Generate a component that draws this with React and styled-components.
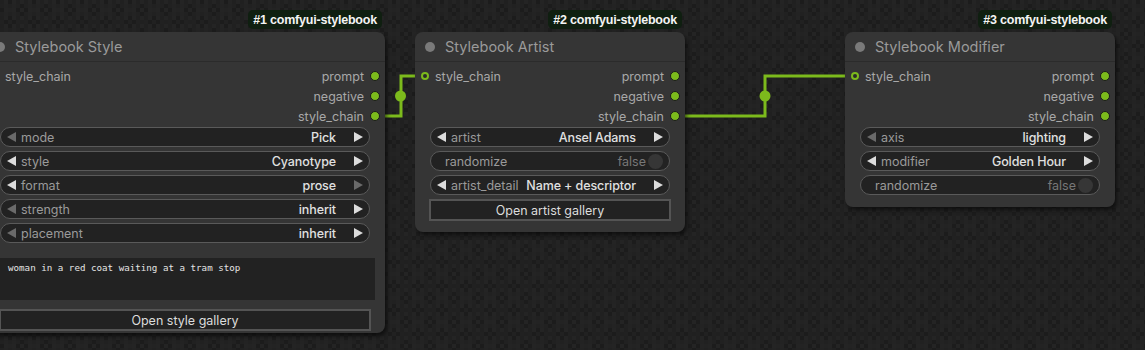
import React from "react";
import styled, { createGlobalStyle } from "styled-components";

const GREEN = "#7cba1c";

const Global = createGlobalStyle`
  html, body { margin: 0; padding: 0; background: #1e1e1e; }
  body { font-family: Inter, "Noto Sans", sans-serif; }
  * { box-sizing: border-box; }
`;

const Canvas = styled.div`
  position: relative;
  width: 1145px;
  height: 350px;
  overflow: hidden;
  background-color: #1c1c1c;
  background-image:
    conic-gradient(#242424 25%, transparent 0 50%, #212121 0 75%, transparent 0),
    conic-gradient(transparent 25%, #202020 0 50%, transparent 0 75%, #232323 0);
  background-size: 8px 8px, 24px 24px;
  background-position: 0 0, 4px 4px;
`;

const Wires = styled.svg`
  position: absolute;
  left: 0;
  top: 0;
  pointer-events: none;
`;

const NodeBox = styled.div`
  position: absolute;
  left: ${(p) => p.$x}px;
  top: ${(p) => p.$y}px;
  width: ${(p) => p.$w}px;
  background: #353535;
  border-radius: 8px;
  box-shadow: 2px 3px 4px rgba(0, 0, 0, 0.55);
  padding-bottom: ${(p) => p.$pb}px;
  display: flex;
  flex-direction: column;
`;

const Badge = styled.div`
  position: absolute;
  right: 3px;
  top: -22px;
  height: 19px;
  padding: 0 5px;
  border-radius: 5px;
  background: #0f1f10;
  color: #f4f4f4;
  font-family: "Liberation Sans", Arial, sans-serif;
  font-size: 12.5px;
  font-weight: 700;
  letter-spacing: -0.2px;
  display: flex;
  align-items: center;
  white-space: nowrap;
`;

const Title = styled.div`
  height: 30px;
  display: flex;
  align-items: center;
  padding-left: 10px;
  gap: 10px;
  border-bottom: 1px solid #2b2b2b;
  color: #9a9a9a;
  font-size: 14.5px;
`;

const TitleDot = styled.span`
  width: 10px;
  height: 10px;
  border-radius: 50%;
  background: #7a7a7a;
  flex: none;
`;

const Slots = styled.div`
  padding-top: 4px;
  display: grid;
  grid-template-columns: 1fr 1fr;
  grid-auto-rows: 20px;
  margin-bottom: 1px;
`;

const SlotIn = styled.div`
  display: flex;
  align-items: center;
  gap: 6px;
  padding-left: 6px;
  color: #a8a8a8;
  font-size: 12.5px;
  grid-column: 1;
`;

const SlotOut = styled.div`
  display: flex;
  align-items: center;
  justify-content: flex-end;
  gap: 6px;
  padding-right: 5px;
  color: #a8a8a8;
  font-size: 12.5px;
  grid-column: 2;
`;

const RingDot = styled.span`
  width: 8px;
  height: 8px;
  border-radius: 50%;
  border: 2px solid ${GREEN};
  background: #2a2a2a;
  flex: none;
`;

const FullDot = styled.span`
  width: 10px;
  height: 10px;
  border-radius: 50%;
  border: 1px solid #1a1a1a;
  background: ${GREEN};
  flex: none;
`;

const Widgets = styled.div`
  display: flex;
  flex-direction: column;
  gap: 4px;
  padding: 0 15px;
`;

const Pill = styled.div`
  height: 20px;
  border-radius: 10px;
  background: #222;
  border: 1px solid #5a5a5a;
  display: flex;
  align-items: center;
  padding: 0 6px 0 6px;
  font-size: 12.5px;
  white-space: nowrap;
`;

const Arrow = styled.span`
  width: 0;
  height: 0;
  border-top: 5px solid transparent;
  border-bottom: 5px solid transparent;
  ${(p) =>
    p.$dir === "left"
      ? `border-right: 9px solid ${p.$on ? "#dcdcdc" : "#6a6a6a"};`
      : `border-left: 9px solid ${p.$on ? "#dcdcdc" : "#6a6a6a"};`}
  flex: none;
`;

const Label = styled.span`
  color: #9a9a9a;
  margin-left: ${(p) => p.$ml}px;
`;

const Value = styled.span`
  flex: 1;
  text-align: right;
  color: #e0e0e0;
  font-weight: 500;
  letter-spacing: -0.1px;
  margin-right: ${(p) => p.$mr}px;
`;

const Dim = styled.span`
  flex: 1;
  text-align: right;
  color: #777;
  margin-right: 2px;
`;

const Knob = styled.span`
  width: 15px;
  height: 15px;
  border-radius: 50%;
  background: #363636;
  flex: none;
`;

const TextArea = styled.div`
  margin: 15px 10px 0 10px;
  height: 42px;
  background: #222;
  padding: 4px 0 0 13px;
  color: #e4e4e4;
  font-family: "DejaVu Sans Mono", "Liberation Mono", monospace;
  font-size: 9.2px;
`;

const Button = styled.div`
  margin: ${(p) => p.$mt}px 14px 0 14px;
  height: 22px;
  background: #222;
  border: 2px solid #545454;
  color: #dcdcdc;
  font-size: 12.5px;
  display: flex;
  align-items: center;
  justify-content: center;
`;

const Combo = ({ label, value, l, r, valueMr = 18 }) => (
  <Pill>
    <Arrow $dir="left" $on={l} />
    <Label $ml={5}>{label}</Label>
    <Value $mr={valueMr}>{value}</Value>
    <Arrow $dir="right" $on={r} />
  </Pill>
);

const Toggle = ({ label, value }) => (
  <Pill>
    <Label $ml={8}>{label}</Label>
    <Dim>{value}</Dim>
    <Knob />
  </Pill>
);

const Node = ({ x, w, pb, badge, title, children }) => (
  <NodeBox $x={x} $y={32} $w={w} $pb={pb}>
    <Badge>{badge}</Badge>
    <Title>
      <TitleDot />
      {title}
    </Title>
    <Slots>
      <SlotIn>
        <RingDot />
        style_chain
      </SlotIn>
      <SlotOut>
        prompt
        <FullDot />
      </SlotOut>
      <SlotOut>
        negative
        <FullDot />
      </SlotOut>
      <SlotOut>
        style_chain
        <FullDot />
      </SlotOut>
    </Slots>
    {children}
  </NodeBox>
);

export default function App() {
  return (
    <>
      <Global />
      <Canvas>
        <Wires width="1145" height="350" viewBox="0 0 1145 350">
          <g fill="none" stroke={GREEN} strokeWidth="3">
            <path d="M384 116 H401 V76 H416" />
            <path d="M684 116 H765 V76 H846" />
          </g>
          <circle cx="400.5" cy="96" r="5.5" fill={GREEN} />
          <circle cx="765" cy="96" r="5.5" fill={GREEN} />
        </Wires>

        <Node x={-15} w={400} pb={2} badge="#1 comfyui-stylebook" title="Stylebook Style">
          <Widgets>
            <Combo label="mode" value="Pick" l={false} r />
            <Combo label="style" value="Cyanotype" l r />
            <Combo label="format" value="prose" l r={false} />
            <Combo label="strength" value="inherit" l={false} r />
            <Combo label="placement" value="inherit" l={false} r />
          </Widgets>
          <TextArea>woman in a red coat waiting at a tram stop</TextArea>
          <Button $mt={9}>Open style gallery</Button>
        </Node>

        <Node x={415} w={270} pb={11} badge="#2 comfyui-stylebook" title="Stylebook Artist">
          <Widgets>
            <Combo label="artist" value="Ansel Adams" l r />
            <Toggle label="randomize" value="false" />
            <Combo label="artist_detail" value="Name + descriptor" l r />
          </Widgets>
          <Button $mt={4}>Open artist gallery</Button>
        </Node>

        <Node x={845} w={270} pb={12} badge="#3 comfyui-stylebook" title="Stylebook Modifier">
          <Widgets>
            <Combo label="axis" value="lighting" l={false} r />
            <Combo label="modifier" value="Golden Hour" l r />
            <Toggle label="randomize" value="false" />
          </Widgets>
        </Node>
      </Canvas>
    </>
  );
}
